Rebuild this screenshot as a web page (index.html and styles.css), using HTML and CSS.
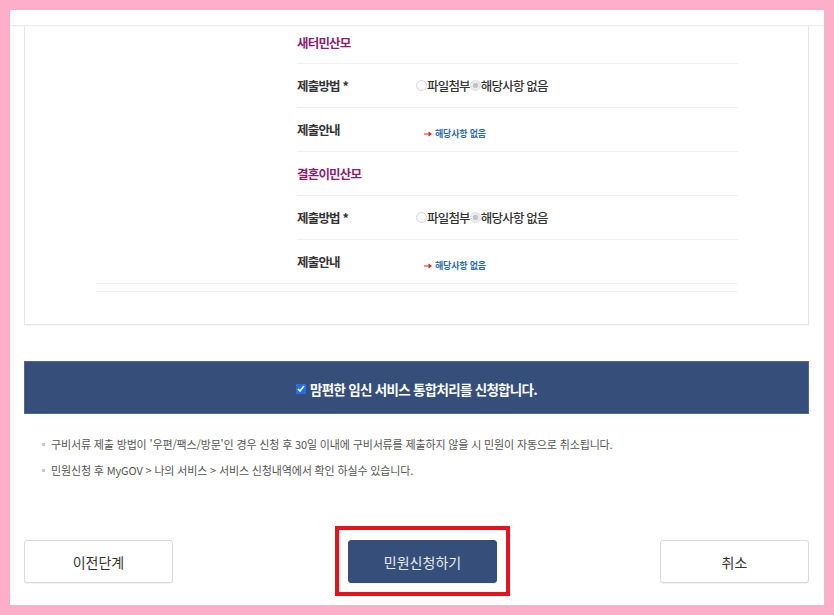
FILE: index.html
```html
<!DOCTYPE html>
<html lang="ko">
<head>
<meta charset="utf-8">
<title>민원신청</title>
<link rel="stylesheet" href="styles.css">
</head>
<body>
<div class="frame">
  <div class="top-strip"></div>
  <div class="content">
    <section class="card">
      <div class="wide">
        <div class="docs">
          <div class="row heading first"><span class="doc-title">새터민산모</span></div>
          <div class="row">
            <span class="label">제출방법 *</span>
            <span class="value">
              <label class="opt"><input type="radio" name="m1" disabled>파일첨부</label>
              <label class="opt"><input type="radio" name="m1" checked disabled>해당사항 없음</label>
            </span>
          </div>
          <div class="row">
            <span class="label">제출안내</span>
            <span class="value info">
              <svg class="arrow" width="8" height="6" viewBox="0 0 8 6"><path d="M0 2.4h4.5V0.4L8 3 4.5 5.6V3.6H0z" fill="#e8202a"/></svg>
              <span class="info-text">해당사항 없음</span>
            </span>
          </div>
          <div class="row heading"><span class="doc-title">결혼이민산모</span></div>
          <div class="row">
            <span class="label">제출방법 *</span>
            <span class="value">
              <label class="opt"><input type="radio" name="m2" disabled>파일첨부</label>
              <label class="opt"><input type="radio" name="m2" checked disabled>해당사항 없음</label>
            </span>
          </div>
          <div class="row last">
            <span class="label">제출안내</span>
            <span class="value info">
              <svg class="arrow" width="8" height="6" viewBox="0 0 8 6"><path d="M0 2.4h4.5V0.4L8 3 4.5 5.6V3.6H0z" fill="#e8202a"/></svg>
              <span class="info-text">해당사항 없음</span>
            </span>
          </div>
        </div>
        <div class="end-line"></div>
      </div>
    </section>

    <div class="banner">
      <label class="agree"><input type="checkbox" checked>맘편한 임신 서비스 통합처리를 신청합니다.</label>
    </div>

    <ul class="notes">
      <li>구비서류 제출 방법이 '우편/팩스/방문'인 경우 신청 후 30일 이내에 구비서류를 제출하지 않을 시 민원이 자동으로 취소됩니다.</li>
      <li>민원신청 후 MyGOV &gt; 나의 서비스 &gt; 서비스 신청내역에서 확인 하실수 있습니다.</li>
    </ul>

    <div class="actions">
      <button class="btn">이전단계</button>
      <span class="highlight"><button class="btn primary">민원신청하기</button></span>
      <button class="btn">취소</button>
    </div>
  </div>
</div>
</body>
</html>
```
FILE: styles.css
```css
* { box-sizing: border-box; }
html, body { margin: 0; padding: 0; }
body {
  background: #fdaec8;
  font-family: "Noto Sans CJK KR", "Noto Sans", sans-serif;
  color: #333;
  width: 834px;
  height: 615px;
  overflow: hidden;
}
.frame {
  margin: 10px;
  height: 595px;
  background: #fff;
  display: flex;
  flex-direction: column;
}
.top-strip {
  height: 16px;
  border-bottom: 1px solid #ededed;
  box-shadow: 0 1px 1px rgba(0,0,0,0.02);
  flex: none;
}
.content {
  padding: 0 15px 0 14px;
  display: flex;
  flex-direction: column;
  flex: 1;
}
.card {
  border: 1px solid #e6e6e6;
  border-top: none;
  height: 299px;
  padding-left: 71px;
  box-shadow: 0 1px 1px rgba(0,0,0,0.03);
}
.wide { width: 642px; }
.docs { margin-left: 201px; }
.row {
  display: flex;
  align-items: center;
  height: 44px;
  border-bottom: 1px solid #efefef;
}
.row.first { height: 38px; padding-bottom: 4px; }
.row.last { border-bottom: 1px solid #f2f2f2; margin-left: -201px; padding-left: 201px; }
.doc-title {
  color: #8e1c6c;
  font-weight: 700;
  font-size: 12.5px;
  letter-spacing: -0.8px;
}
.label {
  width: 119px;
  font-weight: 700;
  font-size: 12.5px;
  letter-spacing: -0.8px;
  color: #333;
}
.value { display: flex; align-items: center; font-size: 12.5px; letter-spacing: -0.8px; font-weight: 500; color: #333; }
.opt { display: inline-flex; align-items: center; }
.opt input {
  appearance: none;
  -webkit-appearance: none;
  width: 11px;
  height: 11px;
  margin: 0;
  border-radius: 50%;
  border: 1px solid #d6d6d6;
  background: #fafafa;
  flex: none;
}
.opt input:checked {
  background: radial-gradient(circle, #c4c4c4 0 2.5px, #ececec 3px);
  border-color: #e0e0e0;
}
.info { padding: 8px 0 0 8px; letter-spacing: 0; }
.arrow { margin-right: 3px; }
.info-text {
  color: #2e6bb5;
  font-weight: 700;
  font-size: 9px;
  letter-spacing: -0.2px;
}
.end-line {
  height: 8px;
  border-bottom: 1px solid #f2f2f2;
}
.banner {
  margin-top: 36px;
  height: 53px;
  background: #354e7a;
  border: 1px solid #50678f;
  display: flex;
  align-items: center;
  justify-content: center;
  flex: none;
}
.agree {
  display: inline-flex;
  align-items: center;
  color: #fff;
  font-weight: 700;
  font-size: 13.5px;
  letter-spacing: -0.7px;
  margin-top: 2px;
}
.agree input {
  width: 10px;
  height: 10px;
  margin: 0 4px 0 0;
  accent-color: #1f6fe5;
}
.notes {
  list-style: none;
  margin: 17px 0 0;
  padding: 0 0 0 17px;
  flex: none;
}
.notes li {
  position: relative;
  padding-left: 10px;
  line-height: 26px;
  height: 26px;
  font-size: 11px;
  letter-spacing: -0.15px;
  color: #555;
}
.notes li::before {
  content: "";
  position: absolute;
  left: 1px;
  top: 12px;
  width: 3px;
  height: 3px;
  background: #c8c8c8;
}
.actions {
  margin-top: 43px;
  display: flex;
  justify-content: space-between;
  align-items: flex-start;
  flex: none;
}
.btn {
  width: 149px;
  height: 43px;
  margin-top: 14px;
  border: 1px solid #dadada;
  border-radius: 3px;
  background: #fff;
  font-family: "Noto Sans CJK KR", "Noto Sans", sans-serif;
  font-size: 14px;
  font-weight: 400;
  color: #333;
  box-shadow: 0 1px 1px rgba(0,0,0,0.06);
  padding: 0;
}
.highlight {
  display: block;
  margin-left: 12px;
  border: 4px solid #e8111c;
  padding: 10px 9px 9px 9px;
}
.btn.primary {
  margin-top: 0;
  display: block;
  background: #354e7a;
  border-color: #354e7a;
  color: #e8ecf4;
}
```
